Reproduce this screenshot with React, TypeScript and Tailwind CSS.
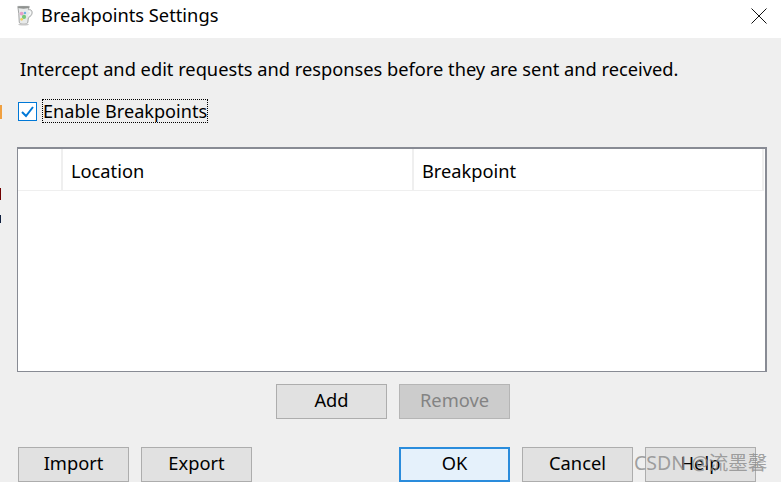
import React from "react";

const F = "font-['Noto_Sans','Open_Sans',sans-serif]";

function Btn({ label, kind = "normal" }: { label: string; kind?: "normal" | "primary" | "disabled" }) {
  const cls =
    kind === "primary"
      ? "border-2 border-[#2a8cdc] bg-[#e5f1fb] text-black"
      : kind === "disabled"
      ? "border border-[#b5b5b5] bg-[#cccccc] text-[#838383]"
      : "border border-[#adadad] bg-[#e1e1e1] text-black";
  return (
    <div className={`w-[111px] h-[35px] flex items-center justify-center pb-[2px] text-[18.3px] leading-none ${cls}`}>{label}</div>
  );
}

function Jug() {
  return (
    <svg width="21" height="21" viewBox="0 0 20 22">
      <path d="M3 1.500 L15 1.500 L14 5 C18 4 19 8 17 11 L14 13.500 L13.500 18 C13 21 5 21 4.500 18 L4 9 Z" fill="#e8eaea" stroke="#a0a2a2" strokeWidth="1" />
      <path d="M14 6.500 C16.500 6 17 8.500 15.500 10 L14 11" fill="none" stroke="#ffffff" strokeWidth="1" />
      <ellipse cx="9" cy="2.500" rx="6" ry="1.300" fill="#8f9290" />
      <circle cx="7" cy="9" r="2" fill="#e8a0c8" />
      <circle cx="9.500" cy="12.500" r="2.200" fill="#78c878" />
      <circle cx="7" cy="15" r="1.500" fill="#f0d060" />
      <circle cx="10.500" cy="8.500" r="1.300" fill="#70b0e0" />
      <ellipse cx="9" cy="20.500" rx="5.500" ry="1" fill="#c8c8c8" />
    </svg>
  );
}

export default function App() {
  return (
    <div className={`relative w-[781px] h-[482px] overflow-hidden bg-[#efefef] text-black ${F}`}>
      <div className="h-[38px] bg-white flex items-start pl-[14px] pr-[14px] pt-[5px]">
        <Jug />
        <span className="ml-[6px] text-[18.3px] leading-[20px]">Breakpoints Settings</span>
        <svg className="ml-auto mt-[3px]" width="16" height="16" viewBox="0 0 16 16">
          <path d="M0.500 0.500 L15.500 15.500 M15.500 0.500 L0.500 15.500" stroke="#111" strokeWidth="1" />
        </svg>
      </div>
      <div className="pl-[20px] pt-[19px] text-[18.25px] leading-[24px]">
        Intercept and edit requests and responses before they are sent and received.
      </div>
      <div className="flex items-center pl-[18px] mt-[18px] h-[24px]">
        <div className="w-[19px] h-[19px] border border-[#0078d7] bg-white flex items-center justify-center">
          <svg width="15" height="15" viewBox="0 0 15 15">
            <path d="M2 8 L6 12 L13 3" fill="none" stroke="#0078d7" strokeWidth="2" />
          </svg>
        </div>
        <span className="ml-[5px] text-[18.1px] leading-[22px] border border-dotted border-black h-[24px]">Enable Breakpoints</span>
      </div>
      <div className="ml-[17px] mt-[24px] w-[750px] h-[225px] bg-white border-l border-b border-t-2 border-r-2 border-[#888b94]">
        <div className="h-[42px] flex text-[18.25px] border-b border-[#efefef] mr-[1px]">
          <div className="w-[45px] border-r-2 border-[#efefef]" />
          <div className="w-[351px] pl-[8px] pt-[2px] flex items-center border-r-2 border-[#efefef]">Location</div>
          <div className="flex-1 pl-[8px] pt-[2px] flex items-center border-r-2 border-[#efefef]">Breakpoint</div>
        </div>
      </div>
      <div className="flex gap-[12px] mt-[12px] pl-[276px]">
        <Btn label="Add" />
        <Btn label="Remove" kind="disabled" />
      </div>
      <div className="flex mt-[28px] pl-[18px]">
        <div className="flex gap-[12px]">
          <Btn label="Import" />
          <Btn label="Export" />
        </div>
        <div className="flex gap-[12px] ml-[147px]">
          <Btn label="OK" kind="primary" />
          <Btn label="Cancel" />
          <Btn label="Help" />
        </div>
      </div>
      <div className="absolute left-[634px] top-[450px] text-[19.5px] leading-[26px] text-[#8a8a8a]/80 font-['Noto_Sans','Noto_Sans_CJK_SC',sans-serif] whitespace-nowrap">
        CSDN @流墨馨
      </div>
      <div className="absolute left-0 top-[105px] w-[2px] h-[14px] bg-[#f0a040]" />
      <div className="absolute left-0 top-[188px] w-[1px] h-[12px] bg-[#700000]" />
      <div className="absolute left-0 top-[215px] w-[1px] h-[8px] bg-[#102040]" />
    </div>
  );
}
